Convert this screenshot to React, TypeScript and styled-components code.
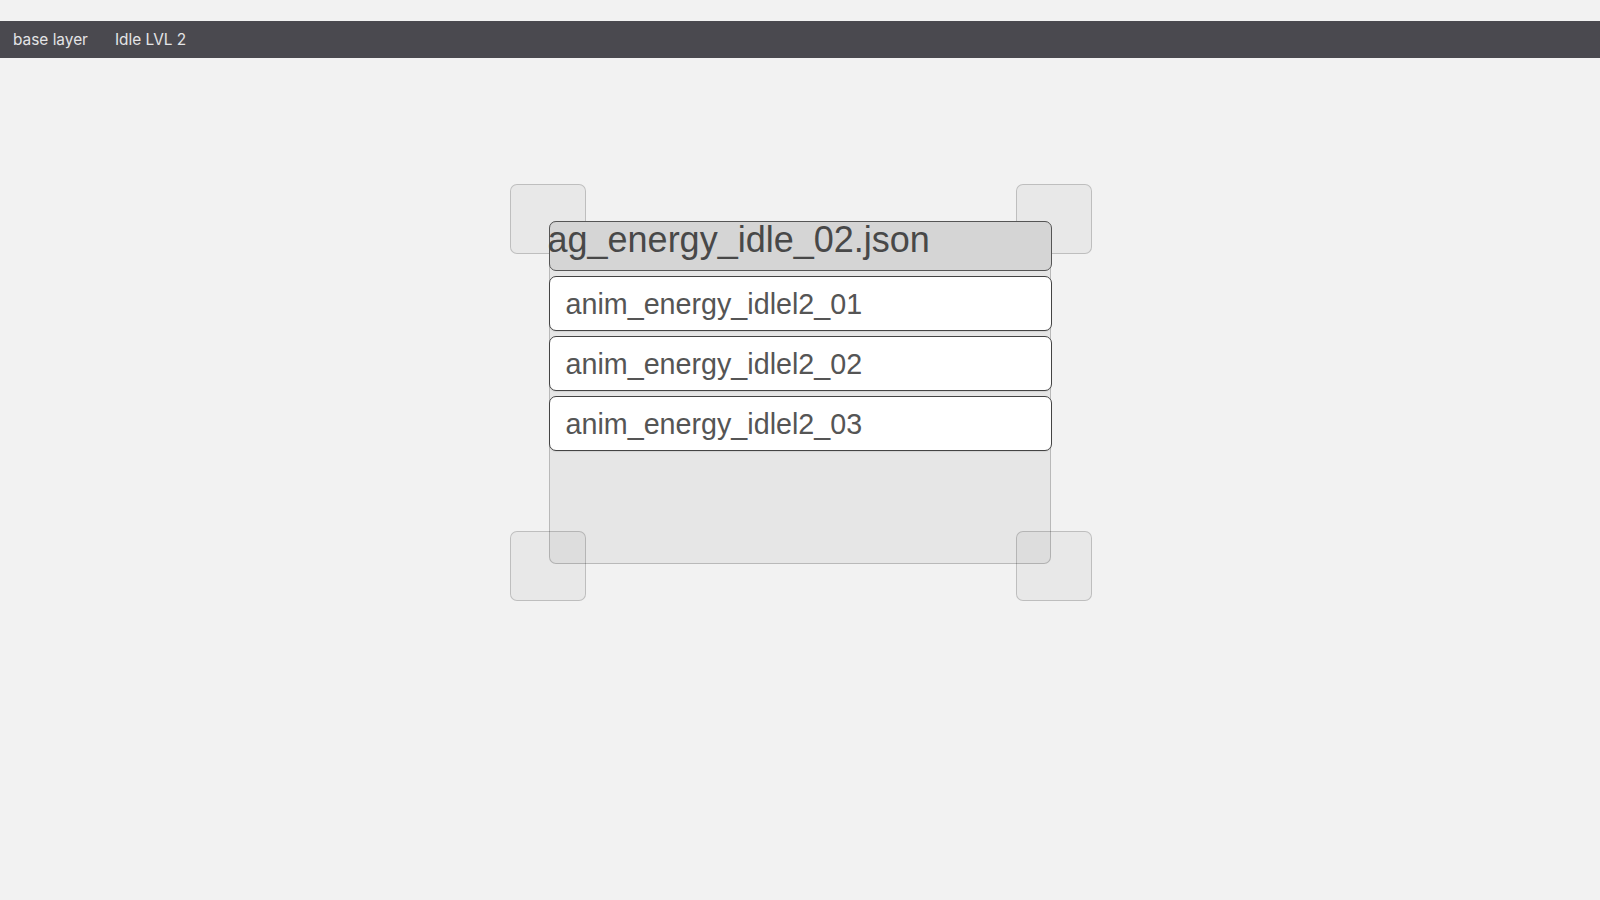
import React from "react";
import styled, { createGlobalStyle } from "styled-components";

const GlobalStyle = createGlobalStyle`
  html, body {
    margin: 0;
    padding: 0;
    background: #f2f2f2;
  }
  body {
    font-family: "Liberation Sans", Arial, sans-serif;
  }
`;

const Page = styled.div`
  width: 1600px;
  height: 900px;
  padding-top: 21px;
  box-sizing: border-box;
  display: flex;
  flex-direction: column;
  background: #f2f2f2;
  overflow: hidden;
`;

const TopBar = styled.nav`
  height: 37px;
  flex: 0 0 37px;
  background: #4a494f;
  display: flex;
  align-items: center;
  padding-left: 13px;
  gap: 27px;
`;

const Crumb = styled.span`
  font-family: Inter, "Noto Sans", sans-serif;
  font-size: 15.4px;
  color: #e4e4e6;
`;

const Canvas = styled.div`
  position: relative;
  flex: 1;
`;

const NodeGroup = styled.div`
  position: absolute;
  left: 510px;
  top: 126px;
  width: 582px;
  height: 417px;
  padding: 37px 40px 0 39px;
  box-sizing: border-box;
`;

const Handle = styled.div<{ $v: "top" | "bottom"; $h: "left" | "right" }>`
  position: absolute;
  ${(p) => p.$v}: 0;
  ${(p) => p.$h}: 0;
  width: 76px;
  height: 70px;
  box-sizing: border-box;
  border: 1.5px solid rgba(0, 0, 0, 0.18);
  border-radius: 7px;
  background: rgba(0, 0, 0, 0.04);
`;

const Panel = styled.div`
  position: relative;
  width: 502px;
  height: 343px;
  box-sizing: border-box;
  border: 1.5px solid rgba(0, 0, 0, 0.2);
  border-radius: 7px;
  background: rgba(0, 0, 0, 0.048);
  display: flex;
  flex-direction: column;
  gap: 5px;
`;

const Header = styled.div`
  margin: -1.5px -1.5px 0;
  height: 50px;
  box-sizing: border-box;
  border: 1.5px solid #555;
  border-radius: 7px;
  background: #d5d5d5;
  overflow: visible;
  white-space: nowrap;
`;

const HeaderTitle = styled.div`
  font-size: 36px;
  line-height: 36px;
  color: #484848;
  margin-left: -2px;
`;

const Row = styled.div`
  margin: 0 -1.5px;
  height: 55px;
  box-sizing: border-box;
  border: 1.5px solid #444;
  border-radius: 7px;
  background: #ffffff;
  display: flex;
  align-items: center;
  padding-left: 16px;
  box-shadow: 0 1px 1px rgba(0, 0, 0, 0.08);
`;

const RowLabel = styled.span`
  font-size: 28.7px;
  color: #555;
  padding-top: 2px;
`;

const rows = ["anim_energy_idlel2_01", "anim_energy_idlel2_02", "anim_energy_idlel2_03"];

export default function App() {
  return (
    <>
      <GlobalStyle />
      <Page>
        <TopBar>
          <Crumb>base layer</Crumb>
          <Crumb>Idle LVL 2</Crumb>
        </TopBar>
        <Canvas>
          <NodeGroup>
            <Handle $v="top" $h="left" />
            <Handle $v="top" $h="right" />
            <Handle $v="bottom" $h="left" />
            <Handle $v="bottom" $h="right" />
            <Panel>
              <Header>
                <HeaderTitle>ag_energy_idle_02.json</HeaderTitle>
              </Header>
              {rows.map((r) => (
                <Row key={r}>
                  <RowLabel>{r}</RowLabel>
                </Row>
              ))}
            </Panel>
          </NodeGroup>
        </Canvas>
      </Page>
    </>
  );
}
